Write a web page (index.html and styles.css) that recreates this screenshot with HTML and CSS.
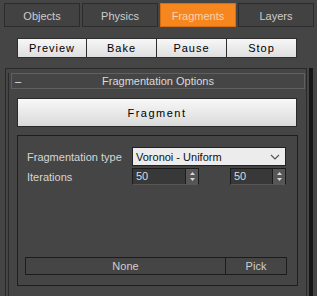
FILE: index.html
```html
<!DOCTYPE html>
<html>
<head>
    <title>Fragments Panel</title>
    <link rel="stylesheet" href="styles.css">
</head>
<body>
    <div class="tabs">
        <div class="tab">Objects</div>
        <div class="tab">Physics</div>
        <div class="tab active">Fragments</div>
        <div class="tab">Layers</div>
    </div>

    <div class="toolbar">
        <button class="tool-btn">Preview</button>
        <button class="tool-btn">Bake</button>
        <button class="tool-btn">Pause</button>
        <button class="tool-btn">Stop</button>
    </div>

    <div class="area">
        <div class="rollout">
            <div class="rollout-body">
                <div class="rollout-head">
                    <span class="minus">&ndash;</span>
                    <span>Fragmentation Options</span>
                </div>

                <button class="big-btn">Fragment</button>

                <div class="group">
                    <div class="row first">
                        <span class="label">Fragmentation type</span>
                        <div class="select">
                            <span>Voronoi - Uniform</span>
                            <svg class="chev" width="10" height="6" viewBox="0 0 10 6">
                                <polyline points="1,1 5,5 9,1" fill="none" stroke="#555" stroke-width="1.2"/>
                            </svg>
                        </div>
                    </div>
                    <div class="row">
                        <span class="label">Iterations</span>
                        <div class="spinner wide">
                            <span class="val">50</span>
                            <span class="arrows">
                                <svg width="7" height="13" viewBox="0 0 7 13">
                                    <polygon points="3.5,2 6,5 1,5" fill="#d8d8d8"/>
                                    <polygon points="1,8 6,8 3.5,11" fill="#d8d8d8"/>
                                </svg>
                            </span>
                        </div>
                        <div class="spinner narrow">
                            <span class="val">50</span>
                            <span class="arrows">
                                <svg width="7" height="13" viewBox="0 0 7 13">
                                    <polygon points="3.5,2 6,5 1,5" fill="#d8d8d8"/>
                                    <polygon points="1,8 6,8 3.5,11" fill="#d8d8d8"/>
                                </svg>
                            </span>
                        </div>
                    </div>

                    <div class="pick-row">
                        <div class="pick-name">None</div>
                        <div class="pick-btn">Pick</div>
                    </div>
                </div>
            </div>
        </div>
        <div class="scrollbar"></div>
    </div>
</body>
</html>
```

FILE: styles.css
```css
* {
    box-sizing: border-box;
}
body {
    margin: 0;
    width: 317px;
    height: 296px;
    overflow: hidden;
    background-color: #454545;
    font-family: "Liberation Sans", Arial, sans-serif;
    font-size: 11px;
    color: #d2d2d2;
}

/* tabs */
.tabs {
    display: flex;
    gap: 2px;
    padding: 3px 0 0 4px;
}
.tab {
    width: 76px;
    height: 24px;
    border: 1px solid #2c2c2c;
    background-color: #424242;
    text-align: center;
    line-height: 24px;
    color: #cdcdcd;
}
.tab.active {
    background-color: #f6861e;
    border-color: #d86e10;
    color: #fbd3ad;
}

/* top buttons */
.toolbar {
    display: flex;
    margin-top: 11px;
    padding-left: 17px;
}
.tool-btn {
    width: 70px;
    height: 20px;
    padding: 0;
    border: 1px solid #2e2e2e;
    border-left: 0;
    background: linear-gradient(#f7f7f7, #dedede);
    font-family: "Liberation Sans", Arial, sans-serif;
    font-size: 11px;
    letter-spacing: 1px;
    color: #000;
}
.tool-btn:first-child {
    border-left: 1px solid #2e2e2e;
}

/* rollout */
.area {
    display: flex;
    margin-top: 10px;
    padding-left: 5px;
}
.rollout {
    width: 302px;
    height: 240px;
    border: 1px solid #2a2a2a;
    border-bottom: 0;
    padding-top: 4px;
}
.scrollbar {
    width: 4px;
    height: 240px;
    margin-left: 2px;
    background-color: #161616;
}
.rollout-body {
    margin-left: 2px;
    height: 100%;
    border-left: 1px solid #2a2a2a;
    display: flex;
    flex-direction: column;
}
.rollout-head {
    position: relative;
    height: 16px;
    margin: 0 1px 0 2px;
    border: 1px solid #606060;
    text-align: center;
    line-height: 14px;
    color: #dadada;
}
.minus {
    position: absolute;
    left: 3px;
    top: 0;
    color: #e8e8e8;
}
.big-btn {
    width: 280px;
    height: 29px;
    margin: 9px 0 0 8px;
    padding: 0;
    border: 1px solid #2a2a2a;
    background: linear-gradient(#f8f8f8, #dadada);
    font-family: "Liberation Sans", Arial, sans-serif;
    font-size: 11px;
    letter-spacing: 1.5px;
    color: #000;
}

/* group box */
.group {
    width: 281px;
    height: 151px;
    margin: 8px 0 0 8px;
    border: 1px solid #1e1e1e;
    padding-left: 9px;
    display: flex;
    flex-direction: column;
}
.row {
    display: flex;
    align-items: center;
    margin-top: 2px;
}
.row.first {
    margin-top: 11px;
}
.label {
    width: 105px;
    color: #d6d6d6;
}
.select {
    width: 154px;
    height: 19px;
    border: 1px solid #222;
    background-color: #ececec;
    color: #111;
    display: flex;
    align-items: center;
    justify-content: space-between;
    padding: 0 5px 0 3px;
}
.spinner {
    height: 17px;
    display: flex;
    background-color: #383838;
    border: 1px solid #1c1c1c;
    border-bottom-color: #575757;
}
.spinner.wide {
    width: 67px;
}
.spinner.narrow {
    width: 56px;
    margin-left: 31px;
}
.val {
    flex: 1;
    padding-left: 3px;
    line-height: 15px;
    color: #dcdcdc;
}
.arrows {
    width: 13px;
    background-color: #565656;
    border-left: 1px solid #1c1c1c;
    display: flex;
    align-items: center;
    justify-content: center;
}

/* pick row */
.pick-row {
    display: flex;
    width: 262px;
    height: 18px;
    margin: auto 0 10px -2px;
    border: 1px solid #1c1c1c;
    line-height: 16px;
    text-align: center;
    color: #cfcfcf;
}
.pick-name {
    width: 200px;
    border-right: 1px solid #1c1c1c;
}
.pick-btn {
    flex: 1;
}
```
